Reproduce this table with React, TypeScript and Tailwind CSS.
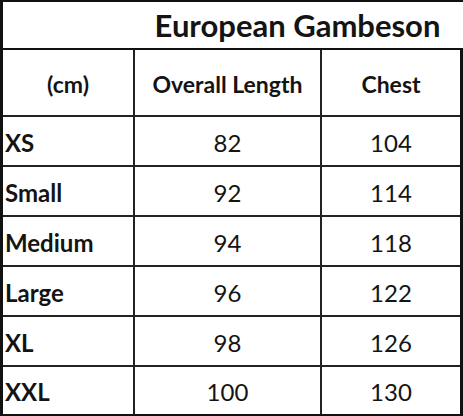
const rows = [
  { size: "XS", length: "82", chest: "104" },
  { size: "Small", length: "92", chest: "114" },
  { size: "Medium", length: "94", chest: "118" },
  { size: "Large", length: "96", chest: "122" },
  { size: "XL", length: "98", chest: "126" },
  { size: "XXL", length: "100", chest: "130" },
];

export default function App() {
  return (
    <div className="w-[463px] h-[416px] bg-white text-[#141414] font-['Lato',sans-serif]">
      {/* title row */}
      <div className="flex h-[50px] border-t-2 border-l-[3px] border-b-2 border-[#111]">
        <div className="w-[132px]" />
        <div className="w-[325px] flex items-center justify-center text-[31px] font-bold pt-[1px]">
          European Gambeson
        </div>
      </div>

      <div className="w-[463px] border-l-[3px] border-r-[3px] border-b-[3px] border-[#111]">
        {/* header */}
        <div className="grid grid-cols-[132px_187px_138px] h-[67px] border-b-2 border-[#222]">
          <div className="flex items-center justify-center pt-[3px] border-r-2 border-[#222] text-[23px] font-bold">
            (cm)
          </div>
          <div className="flex items-center justify-center pt-[3px] border-r-2 border-[#222] text-[23px] font-bold">
            Overall Length
          </div>
          <div className="flex items-center justify-center pt-[3px] text-[23px] font-bold">Chest</div>
        </div>

        {rows.map((r, i) => (
          <div
            key={r.size}
            className={`grid grid-cols-[132px_187px_138px] ${
              i < rows.length - 1 ? "h-[50px] border-b-2 border-[#222]" : "h-[47px]"
            }`}
          >
            <div className="flex items-center pl-[2px] pt-[3px] border-r-2 border-[#222] text-[24px] font-bold">
              {r.size}
            </div>
            <div className="flex items-center justify-center pt-[3px] border-r-2 border-[#222] text-[24px]">
              {r.length}
            </div>
            <div className="flex items-center justify-center pt-[3px] text-[24px]">{r.chest}</div>
          </div>
        ))}
      </div>
    </div>
  );
}
